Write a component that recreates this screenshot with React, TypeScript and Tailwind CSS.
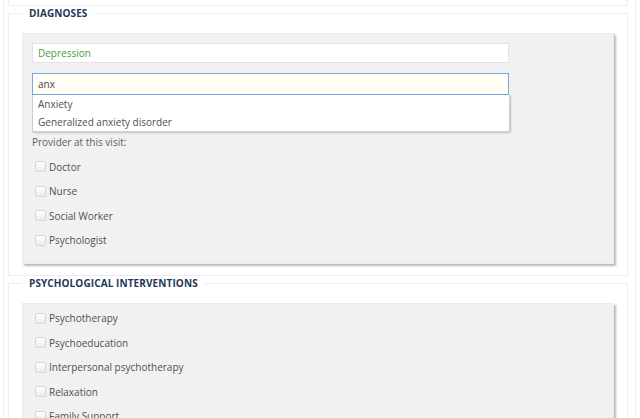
import React from "react";

const font = { fontFamily: "'Open Sans', 'Liberation Sans', sans-serif" };

function Check({ label }: { label: string }) {
  return (
    <div className="flex h-[18px] items-center">
      <span className="ml-[3px] h-[11px] w-[11px] rounded-[2px] border border-[#d6d6d6] bg-gradient-to-b from-[#ffffff] to-[#ececec]" />
      <span className="ml-[3px] text-[10px] leading-[18px] text-[#505050]">{label}</span>
    </div>
  );
}

export default function App() {
  return (
    <div className="h-[418px] w-[640px] overflow-hidden bg-white" style={font}>
      <div className="ml-[3px] h-[418px] w-[633px] border-x border-[#efefef]">
        <div className="ml-[4px] mr-[7px] h-[6px] border-x border-b border-[#eeeeee]" />

        <fieldset className="ml-[4px] mr-[7px] border border-[#eeeeee] px-[13px] pb-[11px]">
          <legend className="px-[7px] text-[10px] font-bold leading-[14px] tracking-[0.1px] text-[#1f3857]">
            DIAGNOSES
          </legend>
          <div className="mt-[13px] border border-[#ebebeb] bg-[#f1f1f1] pb-[14px] pl-[9px] pt-[9px] shadow-[2px_2px_2px_rgba(0,0,0,0.28)]">
            <div className="flex h-[20px] w-[477px] items-center border border-[#e3e3e3] bg-white px-[5px] text-[10px] text-[#4b9a3c]">
              Depression
            </div>
            <div className="relative mt-[10px] w-[477px]">
              <div className="flex h-[22px] items-center border border-[#79a6de] bg-[#fffdf4] px-[5px] text-[10px] text-[#444444]">
                anx
              </div>
              <div className="absolute left-0 top-full z-10 w-[478px] border border-t-0 border-[#cccccc] bg-white text-[10px] leading-[18px] text-[#505050] shadow-[1px_1px_2px_rgba(0,0,0,0.2)]">
                <div className="pl-[5px]">Anxiety</div>
                <div className="pl-[5px]">Generalized anxiety disorder</div>
              </div>
            </div>
            <div className="mt-[38px] flex flex-col gap-[6.5px]">
              <div className="h-[18px] text-[10px] leading-[18px] text-[#606060]">Provider at this visit:</div>
              <Check label="Doctor" />
              <Check label="Nurse" />
              <Check label="Social Worker" />
              <Check label="Psychologist" />
            </div>
          </div>
        </fieldset>

        <fieldset className="ml-[4px] mr-[7px] border border-[#eeeeee] px-[13px] pb-[11px]">
          <legend className="px-[7px] text-[10px] font-bold leading-[14px] tracking-[0.1px] text-[#1f3857]">
            PSYCHOLOGICAL INTERVENTIONS
          </legend>
          <div className="mt-[13px] border border-[#ebebeb] bg-[#f1f1f1] pb-[13px] pl-[9px] pt-[5px] shadow-[2px_2px_2px_rgba(0,0,0,0.28)]">
            <div className="flex flex-col gap-[6.5px]">
              <Check label="Psychotherapy" />
              <Check label="Psychoeducation" />
              <Check label="Interpersonal psychotherapy" />
              <Check label="Relaxation" />
              <Check label="Family Support" />
              <Check label="Other" />
            </div>
          </div>
        </fieldset>
      </div>
    </div>
  );
}
